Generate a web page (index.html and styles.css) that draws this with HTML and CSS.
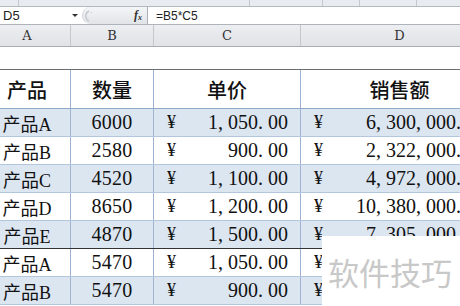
FILE: index.html
```html
<!DOCTYPE html>
<html lang="zh">
<head>
<meta charset="utf-8">
<link rel="stylesheet" href="styles.css">
</head>
<body>
<div class="app">
  <div class="ribbon">
    <span class="rb w19"></span><span class="rb w231"></span><span class="rb w73"></span><span class="rb w37"></span><span class="rb w57"></span><span class="rb grow"></span>
  </div>
  <div class="fbar">
    <div class="namebox"><span class="ref">D5</span><span class="caret"></span></div>
    <div class="tools">
      <svg class="cancel" width="16" height="16" viewBox="0 0 16 16"><path d="M6 3 A5.5 5.5 0 0 0 6 13" fill="none" stroke="#c6cacf" stroke-width="1.4"/><path d="M7.5 4.5 L9.5 4.5" stroke="#cfd3d8" stroke-width="1"/></svg>
      <span class="fx">f<sub>x</sub></span>
    </div>
    <div class="formula">=B5*C5</div>
  </div>
  <div class="sheet">
    <div class="grid">
      <div class="row colhead"><div class="c">A</div><div class="c">B</div><div class="c">C</div><div class="c">D</div></div>
      <div class="row blank"><div class="c"></div><div class="c"></div><div class="c"></div><div class="c"></div></div>
      <div class="row thead"><div class="c">产品</div><div class="c">数量</div><div class="c">单价</div><div class="c">销售额</div></div>

      <div class="row data alt"><div class="c name">产品A</div><div class="c qty">6000</div><div class="c money"><span class="y">¥</span><span class="n">1<i>,</i>050<i>.</i>00</span></div><div class="c money"><span class="y">¥</span><span class="n">6<i>,</i>300<i>,</i>000<i>.</i>00</span></div></div>
      <div class="row data"><div class="c name">产品B</div><div class="c qty">2580</div><div class="c money"><span class="y">¥</span><span class="n">900<i>.</i>00</span></div><div class="c money"><span class="y">¥</span><span class="n">2<i>,</i>322<i>,</i>000<i>.</i>00</span></div></div>
      <div class="row data alt"><div class="c name">产品C</div><div class="c qty">4520</div><div class="c money"><span class="y">¥</span><span class="n">1<i>,</i>100<i>.</i>00</span></div><div class="c money"><span class="y">¥</span><span class="n">4<i>,</i>972<i>,</i>000<i>.</i>00</span></div></div>
      <div class="row data"><div class="c name">产品D</div><div class="c qty">8650</div><div class="c money"><span class="y">¥</span><span class="n">1<i>,</i>200<i>.</i>00</span></div><div class="c money"><span class="y">¥</span><span class="n">10<i>,</i>380<i>,</i>000<i>.</i>00</span></div></div>
      <div class="row data alt sep"><div class="c name">产品E</div><div class="c qty">4870</div><div class="c money"><span class="y">¥</span><span class="n">1<i>,</i>500<i>.</i>00</span></div><div class="c money"><span class="y">¥</span><span class="n">7<i>,</i>305<i>,</i>000<i>.</i>00</span></div></div>
      <div class="row data"><div class="c name">产品A</div><div class="c qty">5470</div><div class="c money"><span class="y">¥</span><span class="n">1<i>,</i>050<i>.</i>00</span></div><div class="c money"><span class="y">¥</span></div></div>
      <div class="row data alt"><div class="c name">产品B</div><div class="c qty">5470</div><div class="c money"><span class="y">¥</span><span class="n">900<i>.</i>00</span></div><div class="c money"><span class="y">¥</span></div></div>
    </div>
    <div class="watermark">软件技巧</div>
  </div>
</div>
</body>
</html>
```

FILE: styles.css
```css
html, body {
  margin: 0;
  padding: 0;
  background: #ffffff;
}
body {
  width: 460px;
  height: 306px;
  overflow: hidden;
  font-family: "Liberation Serif", "Noto Sans CJK SC", serif;
  color: #111;
}
.app {
  width: 460px;
  height: 306px;
  display: flex;
  flex-direction: column;
  overflow: hidden;
}

/* ribbon remnant */
.ribbon {
  height: 6px;
  display: flex;
  background: #e8ebef;
  border-bottom: 1px solid #b4b9c0;
  flex: none;
}
.rb { border-right: 1px solid #c3c8ce; flex: none; }
.w19 { width: 18px; }
.w231 { width: 230px; }
.w73 { width: 72px; }
.w37 { width: 36px; }
.w57 { width: 56px; }
.grow { flex: 1; border-right: 0; }

/* formula bar */
.fbar {
  height: 17px;
  display: flex;
  flex: none;
  background: #ffffff;
  border-bottom: 1px solid #aeb4bb;
}
.namebox {
  width: 82px;
  display: flex;
  align-items: center;
  justify-content: space-between;
  padding: 0 4px 0 3px;
  box-sizing: border-box;
  font-family: "Liberation Sans", sans-serif;
  font-size: 13px;
  color: #222;
}
.caret {
  width: 0;
  height: 0;
  border-left: 3px solid transparent;
  border-right: 3px solid transparent;
  border-top: 3px solid #333;
}
.tools {
  width: 66px;
  display: flex;
  align-items: center;
  justify-content: space-between;
  padding: 0 5px 0 0;
  box-sizing: border-box;
  background: linear-gradient(#f4f5f7, #e1e4e8);
  border-radius: 9px 0 0 9px;
  border-left: 1px solid #d0d4d9;
  border-right: 1px solid #a9afb7;
}
.cancel { display: block; }
.fx {
  font-family: "Liberation Serif", serif;
  font-style: italic;
  font-weight: bold;
  font-size: 12px;
  color: #333;
}
.fx sub { font-size: 8px; vertical-align: -1px; }
.formula {
  flex: 1;
  display: flex;
  align-items: center;
  padding-left: 8px;
  font-family: "Liberation Sans", sans-serif;
  font-size: 12px;
  color: #222;
}

/* sheet */
.sheet {
  position: relative;
  flex: 1;
  overflow: hidden;
}
.grid {
  margin-left: -16px;
  width: 520px;
}
.row {
  display: grid;
  grid-template-columns: 87px 83px 147px 198px;
  box-sizing: border-box;
}
.c {
  box-sizing: border-box;
  display: flex;
  align-items: center;
  justify-content: center;
  min-width: 0;
  white-space: nowrap;
}

.colhead {
  height: 22px;
  background: linear-gradient(#eceef1, #e0e3e7);
  border-bottom: 1px solid #a9aeb5;
}
.colhead .c {
  border-right: 1px solid #c3c8ce;
  font-family: "DejaVu Serif", "Liberation Serif", serif;
  font-size: 13px;
  color: #333;
}

.blank { height: 22px; }

.thead {
  height: 40px;
  border-top: 1px solid #6d6d6d;
  border-bottom: 1px solid #8ea9cb;
}
.thead .c {
  border-right: 1px solid #9db3cf;
  font-family: "Noto Sans CJK SC", sans-serif;
  font-size: 20px;
  font-weight: 500;
  color: #111;
}

.data {
  height: 28px;
  border-bottom: 1px solid #b3c6de;
  background: #ffffff;
}
.data.alt { background: #dce6f1; }
.data.sep { border-bottom: 1px solid #333333; }
.data .c {
  border-right: 1px solid #9db3cf;
  font-size: 20px;
}
.name {
  font-family: "Liberation Serif", "Noto Sans CJK SC", serif;
  font-size: 18px !important;
}
.qty { letter-spacing: 0.2px; }
.data .money {
  justify-content: space-between;
  padding: 0 12px 0 13px;
}
.y { font-size: 18px; }
.n i {
  font-style: normal;
  display: inline-block;
  width: 10px;
  text-align: left;
}

.watermark {
  position: absolute;
  left: 322px;
  top: 211px;
  right: 0;
  bottom: 0;
  background: #ffffff;
  display: flex;
  align-items: center;
  padding-left: 6px;
  font-family: "Noto Sans CJK SC", sans-serif;
  font-size: 31px;
  color: #c8c8c8;
}
```
